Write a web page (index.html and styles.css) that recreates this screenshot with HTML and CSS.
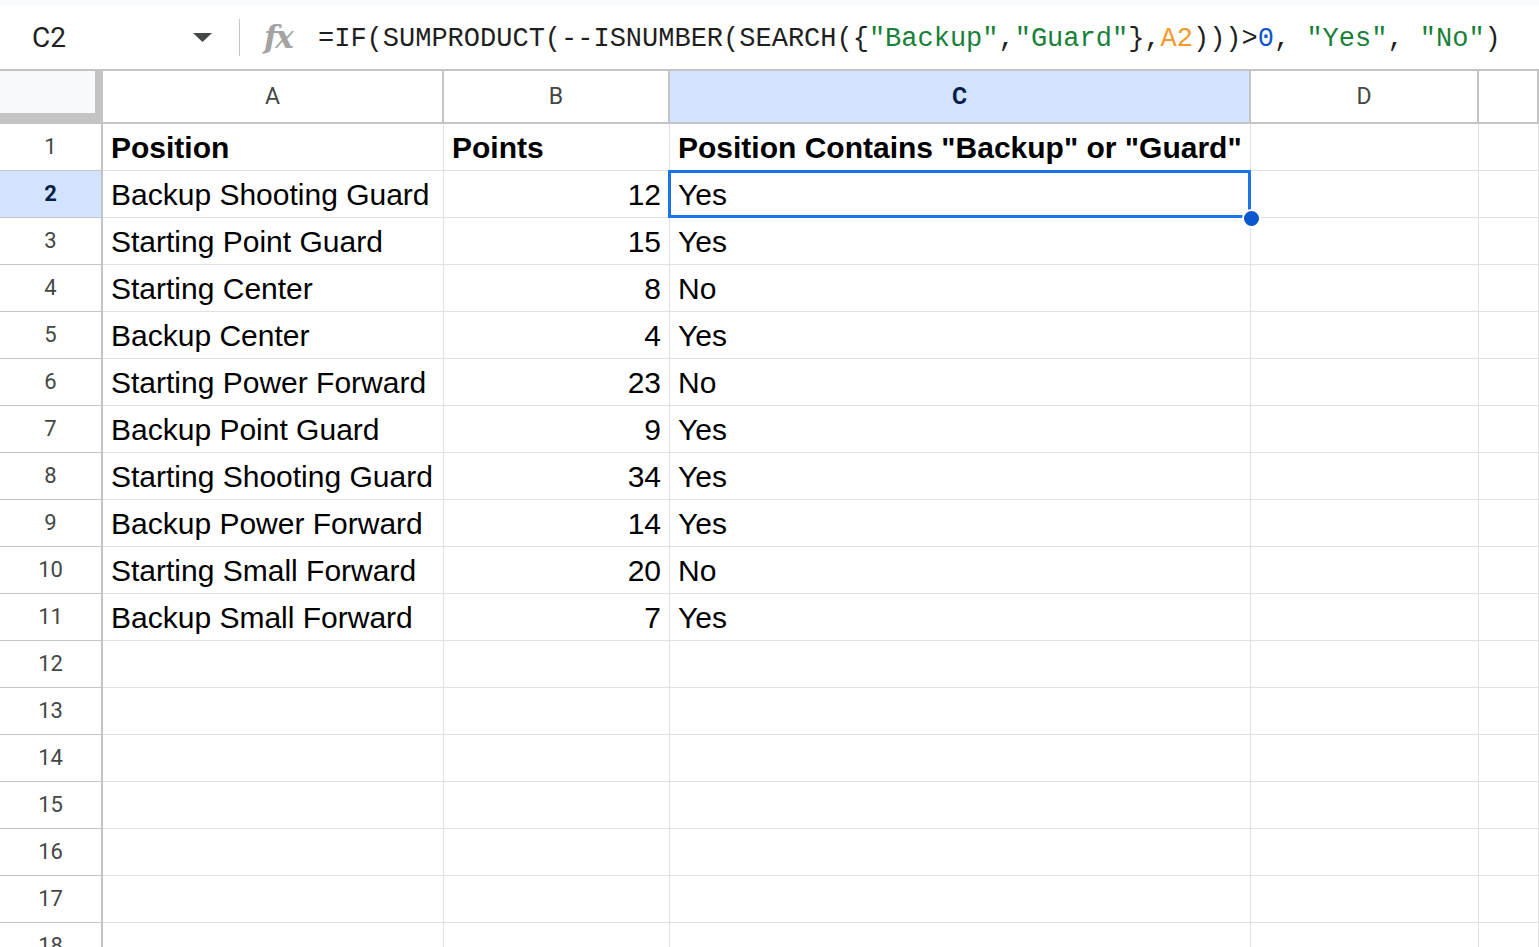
FILE: index.html
```html
<!DOCTYPE html>
<html lang="en">
<head>
  <meta charset="UTF-8" />
  <title>Sheet - Position Contains</title>
  <link rel="stylesheet" href="styles.css">
</head>
<body>
  <!-- Formula bar -->
  <div class="formula-bar">
    <div class="name-box">
      <span class="cell-ref">C2</span>
      <svg class="caret" width="19" height="9" viewBox="0 0 19 9"><path d="M0 0 L19 0 L9.5 9 Z" fill="#444746"/></svg>
    </div>
    <div class="divider"></div>
    <span class="fx">fx</span>
    <div class="formula">=IF(SUMPRODUCT(--ISNUMBER(SEARCH({<span class="str">"Backup"</span>,<span class="str">"Guard"</span>},<span class="ref">A2</span>)))&gt;<span class="num">0</span>, <span class="str">"Yes"</span>, <span class="str">"No"</span>)</div>
  </div>

  <div class="sheet">
    <div class="row head-row">
      <div class="corner"></div>
      <div class="col-head">A</div>
      <div class="col-head">B</div>
      <div class="col-head active">C</div>
      <div class="col-head">D</div>
      <div class="col-head"></div>
    </div>

    <div class="row">
      <div class="row-head">1</div>
      <div class="cell bold">Position</div>
      <div class="cell bold">Points</div>
      <div class="cell bold">Position Contains "Backup" or "Guard"</div>
      <div class="cell"></div>
      <div class="cell"></div>
    </div>
    <div class="row">
      <div class="row-head active">2</div>
      <div class="cell">Backup Shooting Guard</div>
      <div class="cell num">12</div>
      <div class="cell selected">Yes<div class="sel"><span class="handle"></span></div></div>
      <div class="cell"></div>
      <div class="cell"></div>
    </div>
    <div class="row">
      <div class="row-head">3</div>
      <div class="cell">Starting Point Guard</div>
      <div class="cell num">15</div>
      <div class="cell">Yes</div>
      <div class="cell"></div>
      <div class="cell"></div>
    </div>
    <div class="row">
      <div class="row-head">4</div>
      <div class="cell">Starting Center</div>
      <div class="cell num">8</div>
      <div class="cell">No</div>
      <div class="cell"></div>
      <div class="cell"></div>
    </div>
    <div class="row">
      <div class="row-head">5</div>
      <div class="cell">Backup Center</div>
      <div class="cell num">4</div>
      <div class="cell">Yes</div>
      <div class="cell"></div>
      <div class="cell"></div>
    </div>
    <div class="row">
      <div class="row-head">6</div>
      <div class="cell">Starting Power Forward</div>
      <div class="cell num">23</div>
      <div class="cell">No</div>
      <div class="cell"></div>
      <div class="cell"></div>
    </div>
    <div class="row">
      <div class="row-head">7</div>
      <div class="cell">Backup Point Guard</div>
      <div class="cell num">9</div>
      <div class="cell">Yes</div>
      <div class="cell"></div>
      <div class="cell"></div>
    </div>
    <div class="row">
      <div class="row-head">8</div>
      <div class="cell">Starting Shooting Guard</div>
      <div class="cell num">34</div>
      <div class="cell">Yes</div>
      <div class="cell"></div>
      <div class="cell"></div>
    </div>
    <div class="row">
      <div class="row-head">9</div>
      <div class="cell">Backup Power Forward</div>
      <div class="cell num">14</div>
      <div class="cell">Yes</div>
      <div class="cell"></div>
      <div class="cell"></div>
    </div>
    <div class="row">
      <div class="row-head">10</div>
      <div class="cell">Starting Small Forward</div>
      <div class="cell num">20</div>
      <div class="cell">No</div>
      <div class="cell"></div>
      <div class="cell"></div>
    </div>
    <div class="row">
      <div class="row-head">11</div>
      <div class="cell">Backup Small Forward</div>
      <div class="cell num">7</div>
      <div class="cell">Yes</div>
      <div class="cell"></div>
      <div class="cell"></div>
    </div>
    <div class="row">
      <div class="row-head">12</div>
      <div class="cell"></div><div class="cell"></div><div class="cell"></div><div class="cell"></div><div class="cell"></div>
    </div>
    <div class="row">
      <div class="row-head">13</div>
      <div class="cell"></div><div class="cell"></div><div class="cell"></div><div class="cell"></div><div class="cell"></div>
    </div>
    <div class="row">
      <div class="row-head">14</div>
      <div class="cell"></div><div class="cell"></div><div class="cell"></div><div class="cell"></div><div class="cell"></div>
    </div>
    <div class="row">
      <div class="row-head">15</div>
      <div class="cell"></div><div class="cell"></div><div class="cell"></div><div class="cell"></div><div class="cell"></div>
    </div>
    <div class="row">
      <div class="row-head">16</div>
      <div class="cell"></div><div class="cell"></div><div class="cell"></div><div class="cell"></div><div class="cell"></div>
    </div>
    <div class="row">
      <div class="row-head">17</div>
      <div class="cell"></div><div class="cell"></div><div class="cell"></div><div class="cell"></div><div class="cell"></div>
    </div>
    <div class="row">
      <div class="row-head">18</div>
      <div class="cell"></div><div class="cell"></div><div class="cell"></div><div class="cell"></div><div class="cell"></div>
    </div>
  </div>
</body>
</html>
```

FILE: styles.css
```css
body {
  margin: 0;
  height: 100vh;
  overflow: hidden;
  background: #fff;
  font-family: "Liberation Sans", Arial, sans-serif;
  color: #000;
}

/* formula bar */
.formula-bar {
  display: flex;
  align-items: center;
  height: 63px;
  border-top: 6px solid #f9fbfd;
  border-bottom: 2px solid #c4c4c4;
}
.name-box {
  display: flex;
  align-items: center;
  width: 180px;
  padding-left: 32px;
}
.cell-ref {
  font-family: Roboto, sans-serif;
  font-size: 28px;
  color: #1f1f1f;
}
.caret {
  margin-left: auto;
}
.divider {
  width: 1px;
  height: 37px;
  margin-left: 27px;
  background: #c7c7c7;
}
.fx {
  margin-left: 24px;
  width: 34px;
  font-family: "DejaVu Serif", serif;
  font-style: italic;
  font-weight: bold;
  font-size: 31px;
  color: #a3a3a3;
  letter-spacing: -2px;
  line-height: 1;
}
.formula {
  margin-left: 20px;
  padding-top: 2px;
  font-family: "Liberation Mono", monospace;
  font-size: 27px;
  color: #1f1f1f;
  white-space: nowrap;
}
.formula .str { color: #188038; }
.formula .ref { color: #f29a2e; }
.formula .num { color: #1155cc; }

/* grid */
.row {
  display: grid;
  grid-template-columns: 103px 341px 226px 581px 228px 1fr;
  height: 47px;
}
.head-row {
  height: 53px;
}
.corner {
  background: #f8f9fa;
  border-right: 8px solid #c4c4c4;
  border-bottom: 11px solid #c4c4c4;
}
.col-head {
  border-right: 2px solid #c4c4c4;
  border-bottom: 2px solid #c4c4c4;
  font-family: Roboto, sans-serif;
  font-size: 23px;
  color: #444746;
  text-align: center;
  line-height: 51px;
}
.col-head.active {
  background: #d3e3fd;
  color: #041e49;
  font-weight: bold;
}
.row-head {
  border-right: 2px solid #c4c4c4;
  border-bottom: 1px solid #c4c4c4;
  font-family: Roboto, sans-serif;
  font-size: 22px;
  color: #444746;
  text-align: center;
  line-height: 46px;
}
.row-head.active {
  background: #d3e3fd;
  color: #041e49;
  font-weight: bold;
}
.cell {
  border-right: 1px solid #e1e1e1;
  border-bottom: 1px solid #e1e1e1;
  padding: 2px 8px 0 8px;
  font-size: 30px;
  line-height: 44px;
  white-space: nowrap;
}
.cell.bold {
  font-weight: bold;
}
.cell.num {
  text-align: right;
}
.cell.selected {
  position: relative;
}
.sel {
  position: absolute;
  top: -1px;
  left: -2px;
  right: -1px;
  bottom: -1px;
  border: 3px solid #1a73e8;
}
.handle {
  position: absolute;
  right: -13px;
  bottom: -13px;
  width: 15px;
  height: 15px;
  border: 2px solid #fff;
  border-radius: 50%;
  background: #0b57d0;
}
```
